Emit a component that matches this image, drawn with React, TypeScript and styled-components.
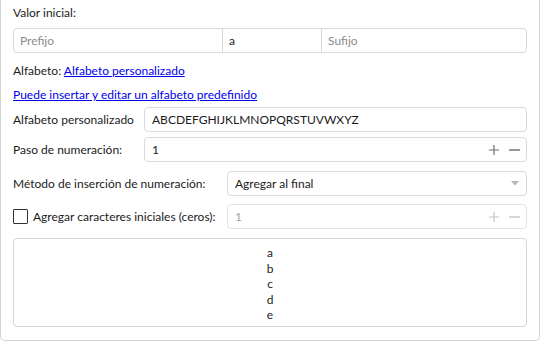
import React from "react";
import styled, { createGlobalStyle } from "styled-components";

const Global = createGlobalStyle`
  html, body { margin: 0; padding: 0; background: #ffffff; }
  body { font-family: "Lato", "Noto Sans", sans-serif; font-size: 12px; color: #1b1b1b; }
  * { box-sizing: border-box; }
`;

const Panel = styled.div`
  width: 540px;
  height: 341px;
  border: 1px solid #d3d3d3;
  border-top: none;
  border-radius: 0 0 5px 5px;
  padding: 5px 12px 0 12px;
  display: flex;
  flex-direction: column;
`;

const Label = styled.div<{ $mt?: number }>`
  margin-top: ${(p) => p.$mt ?? 0}px;
  line-height: 16px;
  height: 16px;
  white-space: nowrap;
`;

const Link = styled.a`
  color: #0000ee;
  text-decoration: underline;
  cursor: pointer;
`;

const Group = styled.div<{ $mt?: number }>`
  margin-top: ${(p) => p.$mt ?? 0}px;
  height: 25px;
  border: 1px solid #dadada;
  border-radius: 4px;
  display: grid;
  grid-template-columns: 208px 99px 1fr;
`;

const GroupCell = styled.div<{ $placeholder?: boolean; $divider?: boolean }>`
  display: flex;
  align-items: center;
  padding-left: 6px;
  color: ${(p) => (p.$placeholder ? "#8c8c8c" : "#1b1b1b")};
  border-left: ${(p) => (p.$divider ? "1px solid #dadada" : "none")};
`;

const Row = styled.div<{ $mt?: number; $label: number }>`
  margin-top: ${(p) => p.$mt ?? 0}px;
  display: grid;
  grid-template-columns: ${(p) => p.$label}px 1fr;
  align-items: center;
  height: 25px;
`;

const RowLabel = styled.div`
  display: flex;
  align-items: center;
  gap: 5px;
  white-space: nowrap;
`;

const Field = styled.div<{ $disabled?: boolean }>`
  height: 25px;
  border: 1px solid ${(p) => (p.$disabled ? "#e4e4e4" : "#dadada")};
  border-radius: 4px;
  display: flex;
  align-items: center;
  padding: 0 7px;
  color: ${(p) => (p.$disabled ? "#a3a3a3" : "#1b1b1b")};
`;

const FieldText = styled.span`
  flex: 1;
  white-space: nowrap;
`;

const Spin = styled.div<{ $disabled?: boolean }>`
  display: flex;
  align-items: center;
  gap: 10px;
  color: ${(p) => (p.$disabled ? "#c4c4c4" : "#6e6e6e")};
  margin-right: -1px;
`;

const Box = styled.div`
  flex-shrink: 0;
  width: 15px;
  height: 15px;
  border: 1px solid #333333;
  border-radius: 1px;
  background: #ffffff;
`;

const Preview = styled.div`
  margin-top: 9px;
  height: 89px;
  border: 1px solid #d6d6d6;
  border-radius: 4px;
  display: flex;
  flex-direction: column;
  align-items: center;
  padding-top: 6px;
`;

const PreviewLine = styled.div`
  line-height: 15.6px;
  height: 15.6px;
`;

const Plus = () => (
  <svg width="10" height="10" viewBox="0 0 10 10">
    <path d="M5 0v10M0 5h10" stroke="currentColor" strokeWidth="1.2" />
  </svg>
);

const Minus = () => (
  <svg width="11" height="10" viewBox="0 0 11 10">
    <path d="M0 5h11" stroke="currentColor" strokeWidth="1.4" />
  </svg>
);

const Arrow = () => (
  <svg width="8" height="5" viewBox="0 0 8 5">
    <path d="M0 0h8L4 4.5z" fill="#b4b4b4" />
  </svg>
);

export default function App() {
  return (
    <>
      <Global />
      <Panel>
        <Label>Valor inicial:</Label>
        <Group $mt={7}>
          <GroupCell $placeholder>Prefijo</GroupCell>
          <GroupCell $divider>a</GroupCell>
          <GroupCell $divider $placeholder>Sufijo</GroupCell>
        </Group>
        <Label $mt={10}>
          Alfabeto: <Link>Alfabeto personalizado</Link>
        </Label>
        <Label $mt={8}>
          <Link>Puede insertar y editar un alfabeto predefinido</Link>
        </Label>
        <Row $mt={4} $label={131}>
          <RowLabel>Alfabeto personalizado</RowLabel>
          <Field>
            <FieldText>ABCDEFGHIJKLMNOPQRSTUVWXYZ</FieldText>
          </Field>
        </Row>
        <Row $mt={5} $label={131}>
          <RowLabel>Paso de numeración:</RowLabel>
          <Field>
            <FieldText>1</FieldText>
            <Spin>
              <Plus />
              <Minus />
            </Spin>
          </Field>
        </Row>
        <Row $mt={9} $label={214}>
          <RowLabel>Método de inserción de numeración:</RowLabel>
          <Field>
            <FieldText>Agregar al final</FieldText>
            <Arrow />
          </Field>
        </Row>
        <Row $mt={8} $label={214}>
          <RowLabel>
            <Box />
            Agregar caracteres iniciales (ceros):
          </RowLabel>
          <Field $disabled>
            <FieldText>1</FieldText>
            <Spin $disabled>
              <Plus />
              <Minus />
            </Spin>
          </Field>
        </Row>
        <Preview>
          {["a", "b", "c", "d", "e"].map((c) => (
            <PreviewLine key={c}>{c}</PreviewLine>
          ))}
        </Preview>
      </Panel>
    </>
  );
}
